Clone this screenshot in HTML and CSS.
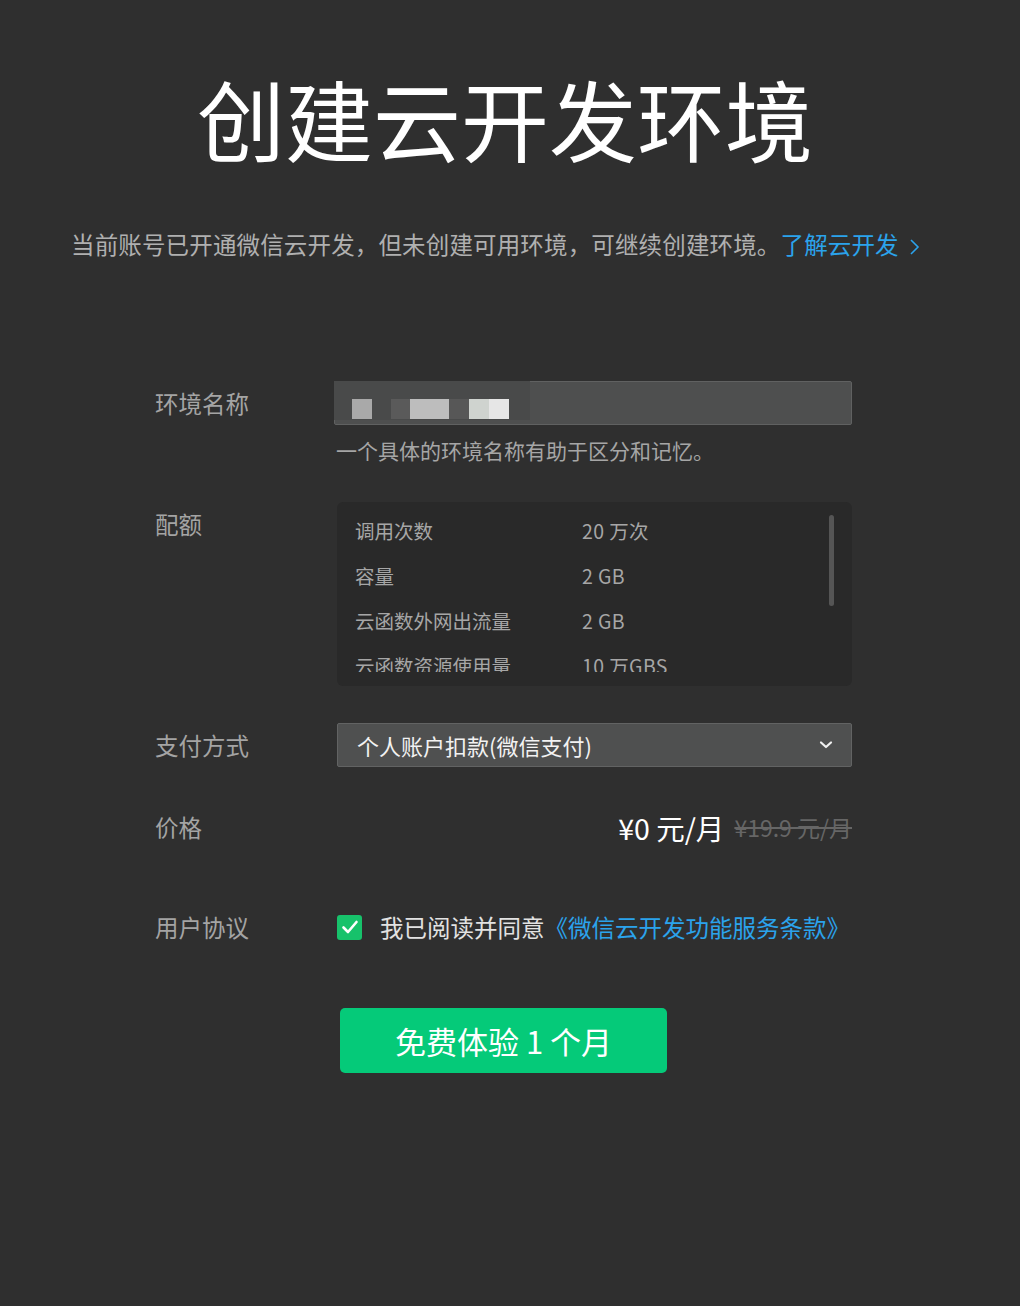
FILE: index.html
```html
<!DOCTYPE html>
<html lang="zh-CN">
<head>
<meta charset="utf-8">
<title>创建云开发环境</title>
<link rel="stylesheet" href="styles.css">
</head>
<body>
<main class="page">
  <h1 class="title">创建云开发环境</h1>
  <p class="intro">当前账号已开通微信云开发，但未创建可用环境，可继续创建环境。<a class="link" href="#">了解云开发<svg class="arrow" width="12" height="18" viewBox="0 0 12 18"><polyline points="2,2 9,9 2,16" fill="none" stroke="#2ba3ec" stroke-width="1.6"/></svg></a></p>

  <section class="form">
    <div class="row row-name">
      <div class="label">环境名称</div>
      <div class="field">
        <div class="input">
          <span class="mosaic">
            <span class="px p1"></span><span class="px gap1"></span><span class="px p2"></span><span class="px p3"></span><span class="px p4"></span><span class="px p5"></span><span class="px p6"></span>
          </span>
        </div>
        <div class="hint">一个具体的环境名称有助于区分和记忆。</div>
      </div>
    </div>

    <div class="row row-quota">
      <div class="label">配额</div>
      <div class="field">
        <div class="quota">
          <div class="quota-list">
            <div class="q-row"><span class="q-key">调用次数</span><span class="q-val">20 万次</span></div>
            <div class="q-row"><span class="q-key">容量</span><span class="q-val">2 GB</span></div>
            <div class="q-row"><span class="q-key">云函数外网出流量</span><span class="q-val">2 GB</span></div>
            <div class="q-row"><span class="q-key">云函数资源使用量</span><span class="q-val">10 万GBS</span></div>
          </div>
          <div class="scrollbar"></div>
        </div>
      </div>
    </div>

    <div class="row row-pay">
      <div class="label">支付方式</div>
      <div class="field">
        <div class="select">
          <span class="select-text">个人账户扣款(微信支付)</span>
          <svg class="caret" width="14" height="10" viewBox="0 0 14 10"><polyline points="2,2.5 7,7 12,2.5" fill="none" stroke="#f0f0f0" stroke-width="2.2" stroke-linecap="round" stroke-linejoin="round"/></svg>
        </div>
      </div>
    </div>

    <div class="row row-price">
      <div class="label">价格</div>
      <div class="field price">
        <span class="now">¥0 元/月</span>
        <span class="old">¥19.9 元/月</span>
      </div>
    </div>

    <div class="row row-agree">
      <div class="label">用户协议</div>
      <div class="field agree">
        <span class="check"><svg width="18" height="16" viewBox="0 0 18 16"><polyline points="2.5,8.5 7,13 15.5,3" fill="none" stroke="#fff" stroke-width="2.6" stroke-linecap="round" stroke-linejoin="round"/></svg></span>
        <span class="agree-text">我已阅读并同意<a class="link" href="#">《微信云开发功能服务条款》</a></span>
      </div>
    </div>

    <div class="row row-btn">
      <div class="label"></div>
      <div class="field">
        <button class="btn">免费体验 1 个月</button>
      </div>
    </div>
  </section>
</main>
</body>
</html>
```

FILE: styles.css
```css
* { box-sizing: border-box; }
html, body { margin: 0; padding: 0; }
body {
  background: #2f2f2f;
  font-family: "Noto Sans CJK SC", "Noto Sans", "Liberation Sans", sans-serif;
  color: #a8a8a8;
  width: 1020px;
  min-height: 1306px;
}
.page { padding-top: 67px; }
.title {
  margin: 0;
  font-size: 88px;
  line-height: 100px;
  font-weight: 400;
  color: #ffffff;
  text-align: center;
  padding-right: 10px;
}
.intro {
  margin: 62px 0 0 71px;
  font-size: 23.5px;
  line-height: 30px;
  color: #b0b0b0;
  white-space: nowrap;
  letter-spacing: 0.15px;
}
.link { color: #2ba3ec; text-decoration: none; }
.arrow { margin-left: 10px; vertical-align: -2px; }

.form {
  margin: 122px 0 0 155px;
  width: 697px;
  display: flex;
  flex-direction: column;
}
.row {
  display: grid;
  grid-template-columns: 182px 515px;
}
.label {
  font-size: 23.5px;
  line-height: 44px;
  color: #a4a4a4;
}
.row-quota { margin-top: 37px; }
.row-pay { margin-top: 37px; }
.row-price { margin-top: 38px; }
.row-agree { margin-top: 56px; }
.row-btn { margin-top: 59px; }

.input {
  height: 44px;
  margin-left: -3px;
  width: 518px;
  background: #4e4f4f;
  border: 1px solid #606161;
  border-radius: 2px;
  display: flex;
  align-items: flex-start;
}
.mosaic {
  display: flex;
  height: 39px;
  width: 196px;
  background: #494a4a;
  margin: -1px 0 0 -1px;
  padding: 18px 0 0 18px;
}
.px { display: block; height: 20px; }
.p1 { width: 20px; background: #a9a9a9; }
.gap1 { width: 19px; background: transparent; }
.p2 { width: 19px; background: #5a5a5a; }
.p3 { width: 39px; background: #bdbdbd; }
.p4 { width: 20px; background: #575757; }
.p5 { width: 20px; background: #cfd3cf; }
.p6 { width: 20px; background: #e6e6e6; }

.hint {
  margin-top: 10px;
  font-size: 21px;
  line-height: 30px;
  color: #a6a6a6;
  margin-left: -1px;
}

.quota {
  position: relative;
  background: #292929;
  border-radius: 6px;
  height: 184px;
  padding: 6px 0 0 18px;
}
.quota-list {
  height: 164px;
  overflow: hidden;
}
.q-row {
  display: flex;
  height: 45px;
  align-items: center;
  font-size: 19.5px;
  color: #a6a6a6;
}
.q-key { width: 227px; }
.q-val { color: #a6a6a6; letter-spacing: 0.4px; }
.scrollbar {
  position: absolute;
  right: 18px;
  top: 13px;
  width: 5px;
  height: 91px;
  border-radius: 3px;
  background: #555555;
}

.select {
  height: 44px;
  background: #4f5050;
  border: 1px solid #626363;
  border-radius: 2px;
  display: flex;
  align-items: center;
  padding: 0 18px 0 19px;
  font-size: 22px;
  color: #f2f2f2;
}
.select-text { flex: 1; line-height: 30px; }
.caret { flex: none; }

.price {
  display: flex;
  justify-content: flex-end;
  align-items: center;
  height: 44px;
}
.now { font-size: 28.5px; color: #ffffff; margin-right: 10px; }
.old { font-size: 23px; color: #666666; text-decoration: line-through; }

.agree {
  display: flex;
  align-items: center;
  height: 44px;
}
.check {
  width: 25px;
  height: 25px;
  border-radius: 3px;
  background: #17c26b;
  display: flex;
  align-items: center;
  justify-content: center;
  margin-right: 18px;
}
.agree-text { font-size: 23.5px; color: #e2e2e2; white-space: nowrap; }

.btn {
  margin-left: 3px;
  width: 327px;
  height: 65px;
  border: none;
  border-radius: 5px;
  background: #05ca79;
  color: #ffffff;
  font-family: inherit;
  font-size: 31px;
  padding: 0;
}
```
